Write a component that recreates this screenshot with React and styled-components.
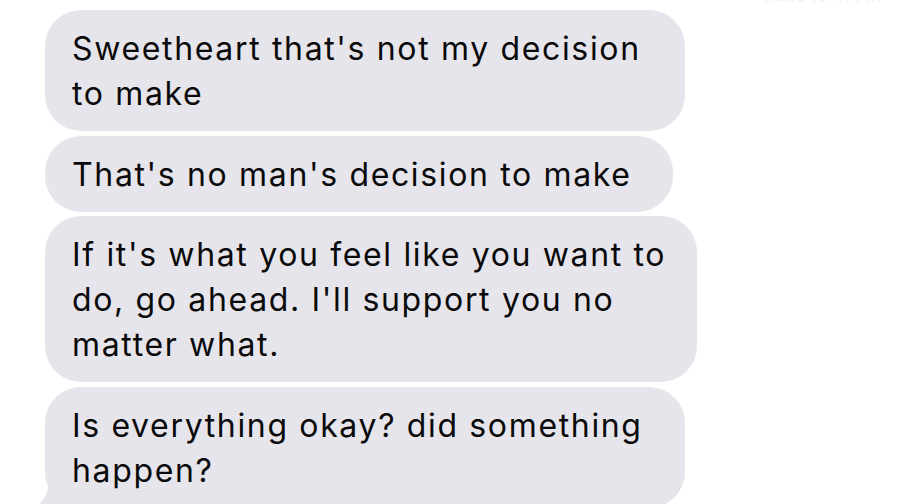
import React from "react";
import styled, { createGlobalStyle } from "styled-components";

const Global = createGlobalStyle`
  html, body { margin: 0; padding: 0; background: #ffffff; }
  body { font-family: Inter, "Liberation Sans", Arial, sans-serif; overflow: hidden; }
`;

const Screen = styled.div`
  width: 921px;
  height: 504px;
  overflow: hidden;
  background: #fff;
  position: relative;
`;

const Stamp = styled.div`
  position: absolute;
  top: -14px;
  right: 40px;
  font-size: 17px;
  color: #f3f3f5;
`;

const Thread = styled.div`
  display: flex;
  flex-direction: column;
  align-items: flex-start;
  gap: 4.5px;
  padding: 10px 0 0 45px;
`;

const Bubble = styled.div`
  position: relative;
  box-sizing: border-box;
  width: ${(p) => p.$w}px;
  background: #e6e5eb;
  border-radius: 36px;
  padding: 16px 0 15px 27px;
  color: #0a0a0a;
  font-family: Inter, "Liberation Sans", Arial, sans-serif;
  font-size: 32px;
  line-height: 45px;
  letter-spacing: 1.65px;
`;

const Line = styled.span`
  display: block;
  white-space: nowrap;
`;

const Tail = styled.svg`
  position: absolute;
  left: -14px;
  bottom: 0;
`;

const messages = [
  { w: 640, lines: ["Sweetheart that's not my decision", "to make"] },
  { w: 628, lines: ["That's no man's decision to make"] },
  {
    w: 652,
    lines: ["If it's what you feel like you want to", "do, go ahead. I'll support you no", "matter what."],
  },
  { w: 640, lines: ["Is everything okay? did something", "happen?"], tail: true },
];

export default function App() {
  return (
    <Screen>
      <Global />
      <Stamp>Read 10:41 PM</Stamp>
      <Thread>
        {messages.map((m, i) => (
          <Bubble key={i} $w={m.w}>
            {m.lines.map((l, j) => (
              <Line key={j}>{l}</Line>
            ))}
            {m.tail && (
              <Tail width="40" height="32" viewBox="0 0 40 32">
                <path d="M40 0 L40 32 L2 32 C12 28 18 18 18 0 Z" fill="#e6e5eb" />
              </Tail>
            )}
          </Bubble>
        ))}
      </Thread>
    </Screen>
  );
}
